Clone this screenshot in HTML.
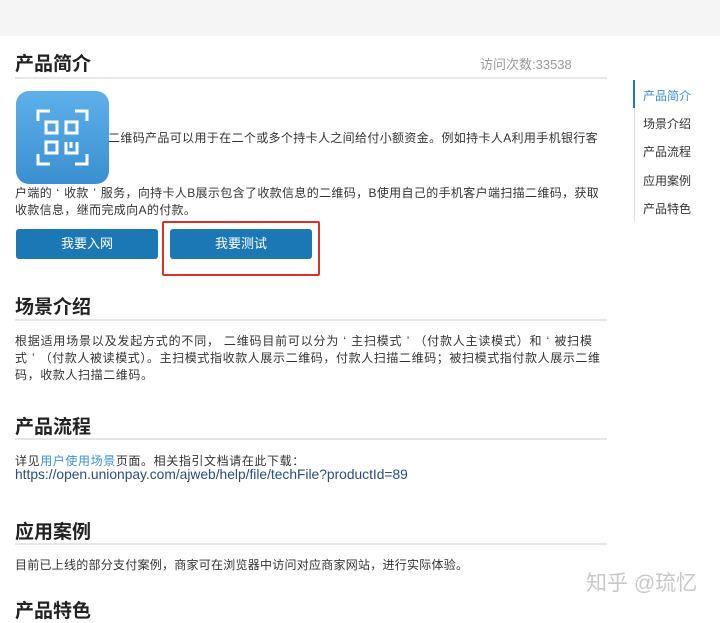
<!DOCTYPE html>
<html><head><meta charset="utf-8"><style>
*{margin:0;padding:0;box-sizing:border-box}
body{width:720px;height:610px;overflow:hidden;background:#fff;position:relative;font-family:"Liberation Sans","Noto Sans CJK SC",sans-serif;color:#333}
.a{position:absolute;white-space:nowrap}
.h{font-size:19px;font-weight:bold;color:#222;left:15px}
.ln{position:absolute;left:15px;width:592px;height:2px;background:#e6e6e6}
.t{font-size:12px;left:15px;color:#333}
.q{display:inline-block;width:12px;text-align:center}
.btn{position:absolute;top:229px;height:30px;width:142px;background:#1b78b4;color:#fff;font-size:13px;text-align:center;line-height:30px;border-radius:3px}
.nav{font-size:12px;left:643px;color:#333}
</style></head><body>
<div class="a" style="left:0;top:0;width:720px;height:36px;background:#f5f5f5"></div>
<div class="a h" style="top:49px">产品简介</div>
<div class="a" style="left:480px;top:54px;font-size:13px;color:#999">访问次数:33538</div>
<div class="ln" style="top:77px"></div>
<div class="a" style="left:16px;top:91px;width:93px;height:93px;border-radius:13px;background:linear-gradient(#5eb0ea,#3a8fd0)">
<svg width="93" height="93" viewBox="0 0 93 93" fill="none" stroke="#fff" stroke-width="3">
<path d="M22 30V20h12M59 20h12v10M71 63v10H59M34 73H22V63"/>
<rect x="30" y="31" width="11" height="11"/><rect x="50" y="31" width="11" height="11"/><rect x="30" y="51" width="11" height="11"/>
<path d="M50 51v11h11V51M55 51v6"/></svg></div>
<div class="a t" style="left:108px;top:129px;letter-spacing:0.35px">二维码产品可以用于在二个或多个持卡人之间给付小额资金。例如持卡人A利用手机银行客</div>
<div class="a t" style="top:184px;letter-spacing:0.35px">户端的<span class="q">‘</span>收款<span class="q">’</span>服务，向持卡人B展示包含了收款信息的二维码，B使用自己的手机客户端扫描二维码，获取</div>
<div class="a t" style="top:201px;letter-spacing:0.35px">收款信息，继而完成向A的付款。</div>
<div class="btn" style="left:16px">我要入网</div>
<div class="btn" style="left:170px">我要测试</div>
<div class="a" style="left:162px;top:221px;width:158px;height:55px;border:2px solid #d9302a;border-radius:2px"></div>
<div class="a" style="left:634px;top:80px;width:1px;height:142px;background:#ddd"></div>
<div class="a" style="left:633px;top:80px;width:2px;height:28px;background:#1b78b4"></div>
<div class="a nav" style="top:87px;color:#3a8fd0">产品简介</div>
<div class="a nav" style="top:115px">场景介绍</div>
<div class="a nav" style="top:143px">产品流程</div>
<div class="a nav" style="top:172px">应用案例</div>
<div class="a nav" style="top:200px">产品特色</div>
<div class="a h" style="top:292px">场景介绍</div>
<div class="ln" style="top:319px"></div>
<div class="a t" style="top:332px;letter-spacing:0.8px">根据适用场景以及发起方式的不同， 二维码目前可以分为<span class="q">‘</span>主扫模式<span class="q">’</span>（付款人主读模式）和<span class="q">‘</span>被扫模</div>
<div class="a t" style="top:349px;letter-spacing:0.6px">式<span class="q">’</span>（付款人被读模式）。主扫模式指收款人展示二维码，付款人扫描二维码；被扫模式指付款人展示二维</div>
<div class="a t" style="top:366px;letter-spacing:0.6px">码，收款人扫描二维码。</div>
<div class="a h" style="top:412px">产品流程</div>
<div class="ln" style="top:438px"></div>
<div class="a t" style="top:452px;letter-spacing:0.6px">详见<span style="color:#3a8fd0">用户使用场景</span>页面。相关指引文档请在此下载：</div>
<div class="a t" style="top:467px;color:#2a4d7a;font-size:13.8px">https://open.unionpay.com/ajweb/help/file/techFile?productId=89</div>
<div class="a h" style="top:517px">应用案例</div>
<div class="ln" style="top:543px"></div>
<div class="a t" style="top:556px;letter-spacing:0.25px">目前已上线的部分支付案例，商家可在浏览器中访问对应商家网站，进行实际体验。</div>
<div class="a h" style="top:596px">产品特色</div>
<div class="a" style="left:586px;top:567px;font-size:21px;color:#c8c8c8">知乎 @琉忆</div>
</body></html>
